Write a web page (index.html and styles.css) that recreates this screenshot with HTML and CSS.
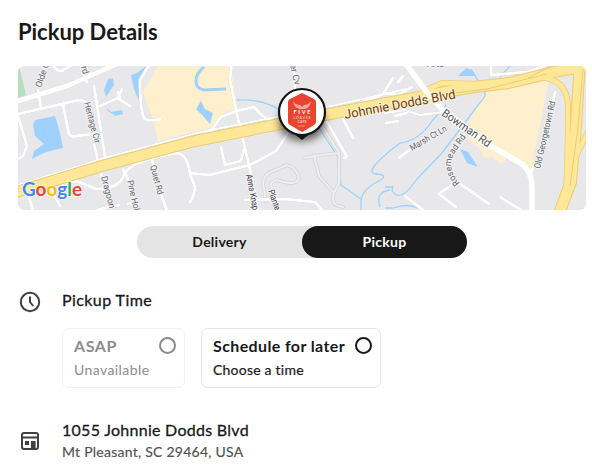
FILE: index.html
```html
<!DOCTYPE html>
<html lang="en">
<head>
<meta charset="utf-8">
<title>Pickup Details</title>
<link rel="stylesheet" href="styles.css">
</head>
<body>
<main class="page">
  <h1 class="title">Pickup Details</h1>
  <div class="map">
    <svg class="map-art" viewBox="18 66 568 144" role="img" aria-label="Map of the pickup location">
      <defs>
        <filter id="shadow" x="-50%" y="-50%" width="200%" height="200%"><feGaussianBlur stdDeviation="4"/></filter>
      </defs>
      <rect x="18" y="66" width="568" height="144" fill="#e8e8ea"/>
      <path fill="#b4dfbd" d="M18 66h1l7 29-8 3z"/>
      <g fill="#feefcd">
        <path d="M158 66h73l6 42-13 5-10 14-56 14-5-21-10-28z"/>
        <path d="M485 92l64-12-18 91-63-34 1-17z"/>
        <path d="M466 137l15 13 2 8 9-1 8 6 5-1 1-11-22-17z"/>
      </g>
      <g fill="#9ed1fc">
        <path d="M33 125l2-5 20-4 5 17 3 15-17 4-14 7 2-8 10-7-9-8z"/>
        <path d="M104 90l4-11 5-1 1 7-8 12z"/>
        <path d="M106 107l5 5 11-2 1 4-8 2-7-5z"/>
        <path d="M131 75l6-2 9-7-7 15 0 20-5-12z"/>
        <path d="M196 109l5-8 4 8 8 4-3 11-8-9z"/>
        <path d="M458 76l8-8 6 2 4 6z"/>
        <path d="M460 149l8 3 10 15-11-4z"/>
      </g>
      <g class="water">
        <path class="creek" d="M204 67q-8 6-8 14t8 9l22-1"/>
        <path d="M237 100q26-1 43 10M319 128l19 29 3 28 20 14v11M361 200q2-11 16-18t-1-8 24-31q19-2 32-22l14-16"/>
        <path d="M471 69l14 23v4l-43 57-25 26q-13 19-20 16t-4-8l-8 0M385 208l8 0q15-5 24 0M380 207q-5-15 10-17M500 77l10-11"/>
      </g>
      <g class="minor-edge">
        <path d="M266 202l-3-19q1-8 8-11l16-7q9 2 12 13-2 6-10 5l-13-3-5 3 2 14M304 158l17-3 18-2M314 155l5 21 15 17q-4 13 9 14M339 153v30l-5 10M318 119l21 34"/>
      </g>
      <g class="minor">
        <path d="M266 202l-3-19q1-8 8-11l16-7q9 2 12 13-2 6-10 5l-13-3-5 3 2 14M304 158l17-3 18-2M314 155l5 21 15 17q-4 13 9 14M339 153v30l-5 10M318 119l21 34"/>
      </g>
      <g class="road">
        <path stroke-width="5" d="M18 101l49-15 59-26"/>
        <path d="M18 114l61-14q6 0 8 4M41 108l-3-18M53 66q6 8 12 3l7-4M84 76l3 6M94 86l11 71 0 2M63 104l5 26q1 8 8 6l18-2M94 144l8 33M100 106l18-8 4-9M117 98l13 8M120 98l-2-6M18 116l9 30-4 10-5 3M149 65l-9 15q0 29 4 38 3 4 17 1M59 184l18-3 19 8q23 0 28-14t53-22q10 1 13 20l19 2 41-10 26-14 12-18M123 169l6 12M150 155l5 14M161 193l6 18M190 174l5 13q-1 10-5 15M52 190l8 16M28 194l5 16M97 210l22-5M128 204l10-1M232 60l-2 20 6 30 16 68 6 34M190 139l20-7 11-15 15-6 18-4q13 15 20 14h12M221 147l4 18M225 165l16-4 3-12M294 60l1 30M245 200l40-1 30 3 7 8M393 78l-10 16-20 8M386 93l12 2 14-8M398 82l5-6M491 66l0 9 36-3 17-6M407 113l-12 3M386 123l12-2M326 120l21 37-3 1M343 119l10 19M399 158l13-10M456 181l33 23M456 182l-17 12 17 13M555 92l-2 11M534 165l-3 8M500 197l21 13M405 196l18 14"/>
        <path stroke-width="2" d="M18 185l90-28 93-25 135-27 75-17"/>
        <path stroke-width="2.5" d="M385 113l20-3 15 5 24-3"/>
      </g>
      <path class="ramp-edge" d="M426 90l16-7 39 1M515 82l22-5q30 1 31 28 0 57-2 85M590 128l-14 28"/>
      <path class="highway-edge" d="M16 192l86-26 93-25 140-28 94-18 45-8 35-4 50-12 40-7M580 60l-4 65-5 57-13 34"/>
      <path class="highway" d="M16 192l86-26 93-25 140-28 94-18 45-8 35-4 50-12 40-7M580 60l-4 65-5 57-13 34"/>
      <path class="ramp" d="M426 90l16-7 39 1M515 82l22-5q30 1 31 28 0 57-2 85M590 128l-14 28M564 68l22-4"/>
      <path class="lane" d="M583 69l-5 59-8 58M430 96l57-7 60-15M528 78l23-12"/>
      <path class="bowman" d="M403 60l23 31 17 19 48 36 28 16q13 8 13 26v24"/>
      <g class="labels">
        <text transform="translate(41 88) rotate(-71)" textLength="26" lengthAdjust="spacingAndGlyphs">Olde C</text>
        <text transform="translate(81 67) rotate(73)">rd</text>
        <text transform="translate(84 103) rotate(75)" textLength="42" lengthAdjust="spacingAndGlyphs">Heritage Cir</text>
        <text transform="translate(101 177) rotate(75)" textLength="33" lengthAdjust="spacingAndGlyphs">Dragoon</text>
        <text transform="translate(127 181) rotate(77)" textLength="31" lengthAdjust="spacingAndGlyphs">Pine Hol</text>
        <text transform="translate(150 166) rotate(75)" textLength="30" lengthAdjust="spacingAndGlyphs">Quiet Rd</text>
        <text class="dark" transform="translate(246 175) rotate(79)" textLength="36" lengthAdjust="spacingAndGlyphs">Anna Knap</text>
        <text class="dark" transform="translate(268 191) rotate(70)" textLength="21" lengthAdjust="spacingAndGlyphs">Plante</text>
        <text transform="translate(290 65) rotate(77)" textLength="21" lengthAdjust="spacingAndGlyphs">er Cv</text>
        <text class="major" transform="translate(345 119) rotate(-10.5)" textLength="113" lengthAdjust="spacingAndGlyphs">Johnnie Dodds Blvd</text>
        <text class="bowman-name" transform="translate(441 115) rotate(35)" textLength="57" lengthAdjust="spacingAndGlyphs">Bowman Rd</text>
        <text transform="translate(412 151) rotate(-30)" textLength="41" lengthAdjust="spacingAndGlyphs">Marsh Ct Ln</text>
        <path id="rosemead" d="M460 183q-14-14-6-29l17-24" fill="none" stroke="none"/>
        <text><textPath href="#rosemead" textLength="53" lengthAdjust="spacingAndGlyphs">Rosemead Rd</textPath></text>
        <text transform="translate(540 169) rotate(-77)" textLength="69" lengthAdjust="spacingAndGlyphs">Old Georgetown Rd</text>
        <text transform="translate(427 67)">Arta</text>
      </g>
      <text class="google" x="22" y="196" textLength="60" lengthAdjust="spacingAndGlyphs"><tspan fill="#4285f4">G</tspan><tspan fill="#ea4335">o</tspan><tspan fill="#fbbc05">o</tspan><tspan fill="#4285f4">g</tspan><tspan fill="#34a853">l</tspan><tspan fill="#ea4335">e</tspan></text>
      <ellipse cx="302" cy="122" rx="23" ry="19" fill="#000" opacity=".6" filter="url(#shadow)"/>
      <path d="M293 133h18l-9 7z" fill="#141414"/>
      <circle cx="302" cy="112" r="23" fill="#fff" stroke="#141414" stroke-width="2.2"/>
      <path d="M302 93l12 6q2 1 2 3v20q0 2-2 3l-12 7-12-7q-2-1-2-3v-20q0-2 2-3z" fill="#e94331"/>
      <path d="M293 101q2 4 7 4l2 2 2-2q5 0 7-4-1 7-7 8h-4q-6-1-7-8z" fill="#f5aaa0"/>
      <g class="logo-text">
        <text x="302" y="114" textLength="17">FIVE</text>
        <text class="logo-small" x="302" y="118.5" textLength="17">LOAVES</text>
        <text class="logo-small" x="302" y="122.5" textLength="9">CAFE</text>
      </g>
      <path d="M298 126h7" stroke="#f5aaa0" stroke-width=".8"/>
    </svg>
  </div>
  <div class="toggle">
    <button class="option">Delivery</button>
    <button class="option selected">Pickup</button>
  </div>
  <section class="row time">
    <svg class="icon" viewBox="0 0 24 24" fill="none" stroke="#404040" stroke-width="2"><circle cx="12" cy="12" r="9.2"/><path d="M12 6.5V12l3.2 4"/></svg>
    <div>
      <h2 class="heading time-heading">Pickup Time</h2>
      <div class="choices">
        <div class="choice disabled">
          <div class="choice-top"><strong class="asap">ASAP</strong><i class="radio"></i></div>
          <span class="unavailable">Unavailable</span>
        </div>
        <div class="choice later">
          <div class="choice-top"><strong class="schedule">Schedule for later</strong><i class="radio"></i></div>
          <span class="choose">Choose a time</span>
        </div>
      </div>
    </div>
  </section>
  <section class="row address">
    <svg class="icon" viewBox="0 0 24 24"><path fill="#404040" fill-rule="evenodd" d="M6 3h12q3 0 3 3v12q0 3-3 3H6q-3 0-3-3V6q0-3 3-3zM5 6v1.6h14V6q0-1-1-1H6q-1 0-1 1zm0 3.6V18q0 1 1 1h7v-7h4.6v7h.4q1 0 1-1V9.6zM7 12h4v4H7z"/></svg>
    <div>
      <h2 class="heading street">1055 Johnnie Dodds Blvd</h2>
      <p class="city">Mt Pleasant, SC 29464, USA</p>
    </div>
  </section>
</main>
</body>
</html>
```
FILE: styles.css
```css
* { box-sizing: border-box; }
body { margin: 0; background: #fff; color: #191919; font-family: Lato, "Open Sans", sans-serif; }
.page { height: 476px; padding: 17px 6px 0 18px; overflow: hidden; }
h1, h2, p { margin: 0; }
.title { height: 49px; font-size: 22px; line-height: 29px; font-weight: 700; letter-spacing: -.03px; }
.map { width: 568px; height: 144px; border-radius: 6px; overflow: hidden; }
.map-art { display: block; width: 568px; height: 144px; font-family: Roboto, sans-serif; }
.water { fill: none; stroke: #9ed1fc; stroke-width: 1.3; }
.creek { stroke-width: 3; }
.minor, .minor-edge, .road { fill: none; stroke-linecap: round; stroke-linejoin: round; }
.minor-edge { stroke: #d2d3d6; stroke-width: 3.6; }
.minor { stroke: #eeeeef; stroke-width: 2.2; }
.road { stroke: #fff; stroke-width: 3; filter: drop-shadow(0 0 .5px #bbb); }
.highway, .highway-edge, .ramp, .ramp-edge, .lane, .bowman { fill: none; stroke-linejoin: round; }
.highway-edge { stroke: #eccb75; stroke-width: 12; }
.highway { stroke: #ffe798; stroke-width: 10; }
.ramp-edge { stroke: #eccb75; stroke-width: 6; }
.ramp { stroke: #ffe798; stroke-width: 4.5; }
.lane { stroke: #eccb75; stroke-width: 1; }
.bowman { stroke: #fff; stroke-width: 5.5; }
.labels { font-size: 9px; fill: #62666a; stroke: #f4f4f4; stroke-width: 2px; paint-order: stroke; stroke-linejoin: round; }
.labels .dark { fill: #3c3f43; }
.labels .major { font-size: 13px; fill: #68421f; stroke: #fff4cf; }
.labels .bowman-name { font-size: 11.5px; fill: #505357; stroke: #fff; }
.google { font: 700 19.5px Lato, sans-serif; stroke: #fff; stroke-width: 1.2px; paint-order: stroke; }
.logo-text { fill: #fff; text-anchor: middle; font: 700 5.5px Lato, sans-serif; }
.logo-small { font-size: 3.6px; fill: #f8c0b9; }
.toggle { display: flex; width: 330px; height: 32px; margin: 16px 0 0 119px; border-radius: 16px; background: #e4e4e4; }
.option { flex: 1; padding: 0; border: 0; border-radius: 16px; background: none; color: #191919; font: 700 14px/32px Lato, sans-serif; letter-spacing: .25px; }
.selected { background: #181818; color: #fff; }
.row { display: flex; gap: 20px; }
.icon { width: 24px; height: 24px; flex: none; }
.time { margin-top: 32px; }
.address { margin-top: 32px; }
.address .icon { margin-top: 9px; }
.heading { font-size: 16px; line-height: 20px; height: 22px; font-weight: 400; -webkit-text-stroke: .3px currentColor; }
.time-heading { letter-spacing: .42px; }
.street { letter-spacing: .28px; }
.choices { display: flex; gap: 16px; margin-top: 16px; }
.choice { width: 123px; height: 60px; padding: 8px 8px 0 11px; border: 1px solid #f1f1f1; border-radius: 7px; font-size: 14px; line-height: 20px; }
.later { width: 180px; border-color: #e4e4e4; }
.disabled { color: #8c8c8c; }
.choice-top { display: flex; justify-content: space-between; height: 23px; font-size: 16px; line-height: 18px; }
.asap { letter-spacing: .6px; }
.unavailable { letter-spacing: .42px; }
.schedule { letter-spacing: .38px; }
.choose { letter-spacing: .22px; -webkit-text-stroke: .2px currentColor; }
.radio { width: 17px; height: 17px; border: 2px solid currentColor; border-radius: 50%; }
.city { color: #505050; font-size: 14px; line-height: 20px; letter-spacing: .25px; -webkit-text-stroke: .15px currentColor; }
```
